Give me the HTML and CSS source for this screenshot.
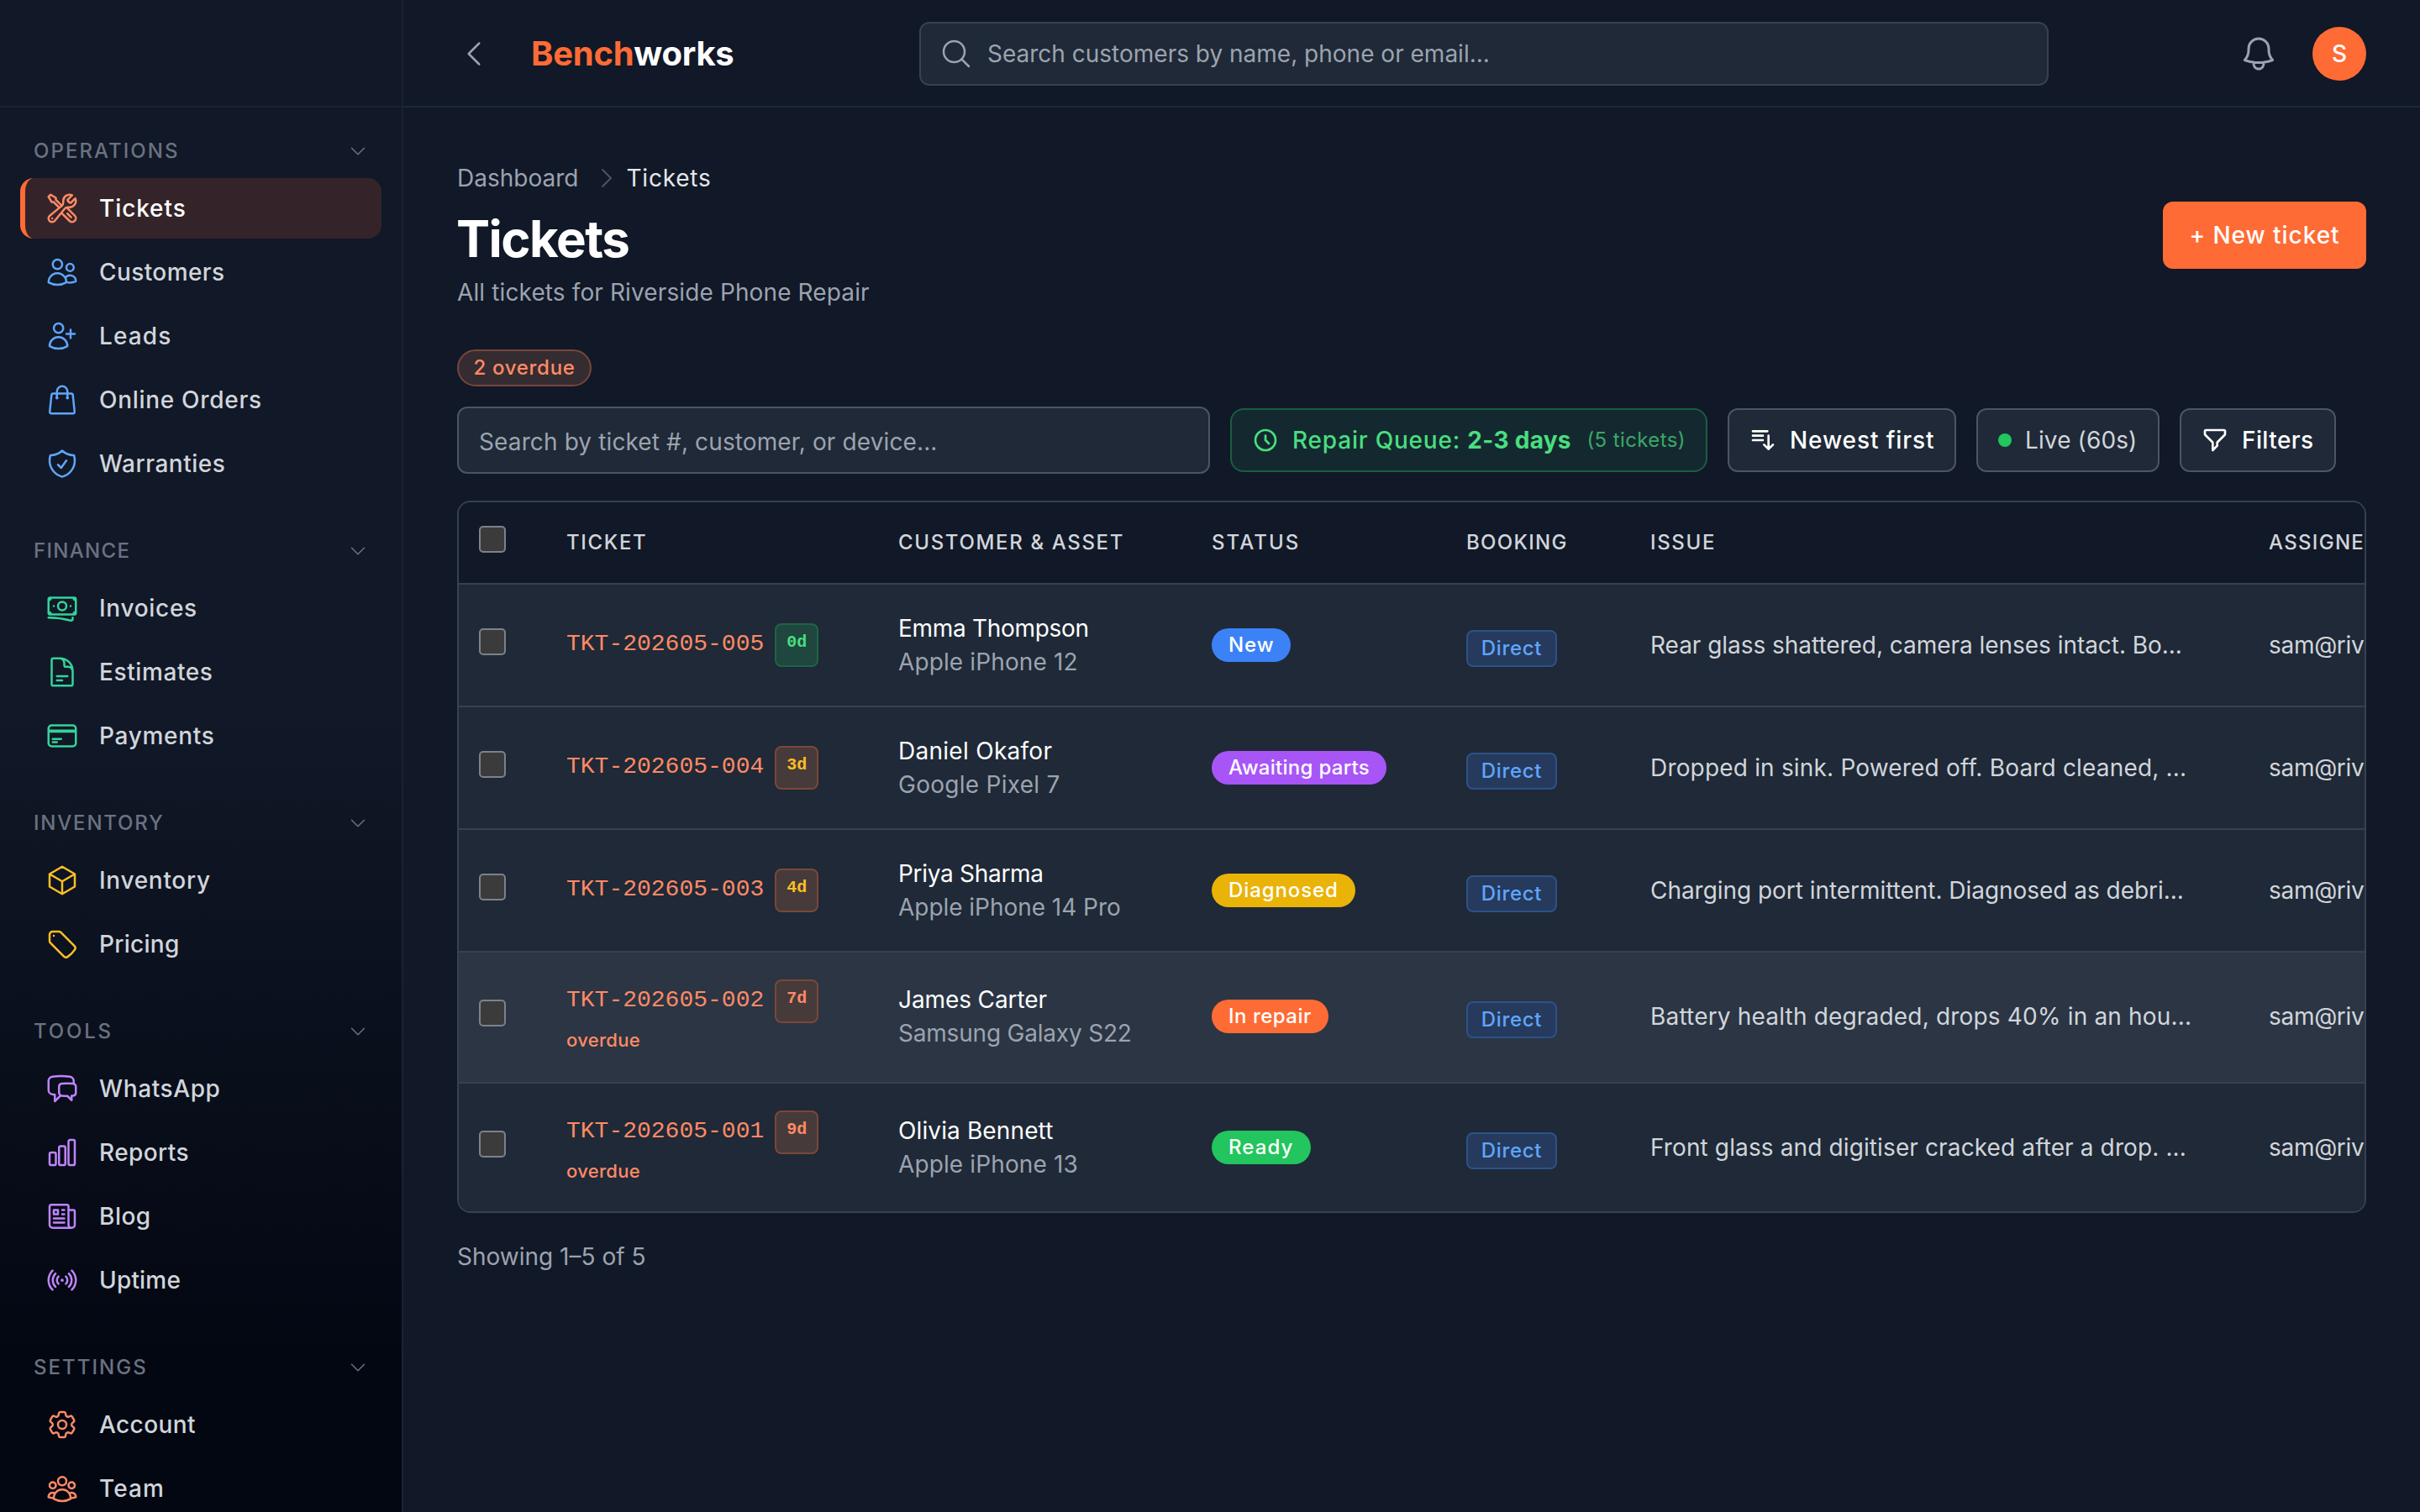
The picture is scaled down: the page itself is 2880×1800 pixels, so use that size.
FILE: index.html
```html
<!DOCTYPE html>
<html lang="en">
<head>
<meta charset="utf-8">
<title>Tickets - Benchworks</title>
<link rel="stylesheet" href="styles.css">
</head>
<body>
<div class="app">
  <aside class="sidebar">
    <div class="sidebar-top"></div>
    <nav class="nav">
      <section class="group blue">
        <h2 class="group-title ls-20">Operations<svg class="chev" viewBox="0 0 24 24"><path d="m19.5 8.25-7.5 7.5-7.5-7.5"/></svg></h2>
        <a class="item active ls-9"><svg viewBox="0 0 24 24"><path d="M11.42 15.17 17.25 21A2.652 2.652 0 0 0 21 17.25l-5.877-5.877M11.42 15.17l2.496-3.03c.317-.384.74-.626 1.208-.766M11.42 15.17l-4.655 5.653a2.548 2.548 0 1 1-3.586-3.586l6.837-5.63m5.108-.233c.55-.164 1.163-.188 1.743-.14a4.5 4.5 0 0 0 4.486-6.336l-3.276 3.277a3.004 3.004 0 0 1-2.25-2.25l3.276-3.276a4.5 4.5 0 0 0-6.336 4.486c.091 1.076-.071 2.264-.904 2.95l-.102.085m-1.745 1.437L5.909 7.5H4.5L2.25 3.75l1.5-1.5L7.5 4.5v1.409l4.26 4.26m-1.745 1.437 1.745-1.437m6.615 8.206L15.75 15.75M4.867 19.125h.008v.008h-.008v-.008Z"/></svg>Tickets</a>
        <a class="item ls-4"><svg viewBox="0 0 24 24"><path d="M15 19.128a9.38 9.38 0 0 0 2.625.372 9.337 9.337 0 0 0 4.121-.952 4.125 4.125 0 0 0-7.533-2.493M15 19.128v-.003c0-1.113-.285-2.16-.786-3.07M15 19.128v.106A12.318 12.318 0 0 1 8.624 21c-2.331 0-4.512-.645-6.374-1.766l-.001-.109a6.375 6.375 0 0 1 11.964-3.07M12 6.375a3.375 3.375 0 1 1-6.75 0 3.375 3.375 0 0 1 6.75 0Zm8.25 2.25a2.625 2.625 0 1 1-5.25 0 2.625 2.625 0 0 1 5.25 0Z"/></svg>Customers</a>
        <a class="item ls-10"><svg viewBox="0 0 24 24"><path d="M18 7.5v3m0 0v3m0-3h3m-3 0h-3m-2.25-4.125a3.375 3.375 0 1 1-6.75 0 3.375 3.375 0 0 1 6.75 0ZM3 19.235v-.11a6.375 6.375 0 0 1 12.75 0v.109A12.318 12.318 0 0 1 9.374 21c-2.331 0-4.512-.645-6.374-1.766Z"/></svg>Leads</a>
        <a class="item ls-7"><svg viewBox="0 0 24 24"><path d="M15.75 10.5V6a3.75 3.75 0 1 0-7.5 0v4.5m11.356-1.993 1.263 12c.07.665-.45 1.243-1.119 1.243H4.25a1.125 1.125 0 0 1-1.12-1.243l1.264-12A1.125 1.125 0 0 1 5.513 7.5h12.974c.576 0 1.059.435 1.119 1.007ZM8.625 10.5a.375.375 0 1 1-.75 0 .375.375 0 0 1 .75 0Zm7.5 0a.375.375 0 1 1-.75 0 .375.375 0 0 1 .75 0Z"/></svg>Online Orders</a>
        <a class="item ls-5"><svg viewBox="0 0 24 24"><path d="M9 12.75 11.25 15 15 9.75m-3-7.036A11.959 11.959 0 0 1 3.598 6 11.99 11.99 0 0 0 3 9.749c0 5.592 3.824 10.29 9 11.623 5.176-1.332 9-6.03 9-11.622 0-1.31-.21-2.571-.598-3.751h-.152c-3.196 0-6.1-1.248-8.25-3.285Z"/></svg>Warranties</a>
      </section>
      <section class="group green">
        <h2 class="group-title ls-13">Finance<svg class="chev" viewBox="0 0 24 24"><path d="m19.5 8.25-7.5 7.5-7.5-7.5"/></svg></h2>
        <a class="item ls-7"><svg viewBox="0 0 24 24"><path d="M2.25 18.75a60.07 60.07 0 0 1 15.797 2.101c.727.198 1.453-.342 1.453-1.096V18.75M3.75 4.5v.75A.75.75 0 0 1 3 6h-.75m0 0v-.375c0-.621.504-1.125 1.125-1.125H20.25M2.25 6v9m18-10.5v.75c0 .414.336.75.75.75h.75m-1.5-1.5h.375c.621 0 1.125.504 1.125 1.125v9.75c0 .621-.504 1.125-1.125 1.125h-.375m1.5-1.5H21a.75.75 0 0 0-.75.75v.75m0 0H3.75m0 0h-.375a1.125 1.125 0 0 1-1.125-1.125V15m1.5 1.5v-.75A.75.75 0 0 0 3 15h-.75M15 10.5a3 3 0 1 1-6 0 3 3 0 0 1 6 0Zm3 0h.008v.008H18V10.5Zm-12 0h.008v.008H6V10.5Z"/></svg>Invoices</a>
        <a class="item ls-6"><svg viewBox="0 0 24 24"><path d="M19.5 14.25v-2.625a3.375 3.375 0 0 0-3.375-3.375h-1.5A1.125 1.125 0 0 1 13.5 7.125v-1.5a3.375 3.375 0 0 0-3.375-3.375H8.25m0 12.75h7.5m-7.5 3H12M10.5 2.25H5.625c-.621 0-1.125.504-1.125 1.125v17.25c0 .621.504 1.125 1.125 1.125h12.75c.621 0 1.125-.504 1.125-1.125V11.25a9 9 0 0 0-9-9Z"/></svg>Estimates</a>
        <a class="item ls-7"><svg viewBox="0 0 24 24"><path d="M2.25 8.25h19.5M2.25 9h19.5m-16.5 5.25h6m-6 2.25h3m-3.75 3h15a2.25 2.25 0 0 0 2.25-2.25V6.75A2.25 2.25 0 0 0 19.5 4.5h-15a2.25 2.25 0 0 0-2.25 2.25v10.5A2.25 2.25 0 0 0 4.5 19.5Z"/></svg>Payments</a>
      </section>
      <section class="group amber">
        <h2 class="group-title ls-18">Inventory<svg class="chev" viewBox="0 0 24 24"><path d="m19.5 8.25-7.5 7.5-7.5-7.5"/></svg></h2>
        <a class="item ls-7"><svg viewBox="0 0 24 24"><path d="m21 7.5-9-5.25L3 7.5m18 0-9 5.25m9-5.25v9l-9 5.25M3 7.5l9 5.25M3 7.5v9l9 5.25m0-9v9"/></svg>Inventory</a>
        <a class="item ls-3"><svg viewBox="0 0 24 24"><path d="M9.568 3H5.25A2.25 2.25 0 0 0 3 5.25v4.318c0 .597.237 1.17.659 1.591l9.581 9.581c.699.699 1.78.872 2.607.33a18.095 18.095 0 0 0 5.223-5.223c.542-.827.369-1.908-.33-2.607L11.16 3.66A2.25 2.25 0 0 0 9.568 3Z"/><path d="M6 6h.008v.008H6V6Z"/></svg>Pricing</a>
      </section>
      <section class="group purple">
        <h2 class="group-title ls-28">Tools<svg class="chev" viewBox="0 0 24 24"><path d="m19.5 8.25-7.5 7.5-7.5-7.5"/></svg></h2>
        <a class="item ls-6"><svg viewBox="0 0 24 24"><path d="M20.25 8.511c.884.284 1.5 1.128 1.5 2.097v4.286c0 1.136-.847 2.1-1.98 2.193-.34.027-.68.052-1.02.072v3.091l-3-3c-1.354 0-2.694-.055-4.02-.163a2.115 2.115 0 0 1-.825-.242m9.345-8.334a2.126 2.126 0 0 0-.476-.095 48.64 48.64 0 0 0-8.048 0c-1.131.094-1.976 1.057-1.976 2.192v4.286c0 .837.46 1.58 1.155 1.951m9.345-8.334V6.637c0-1.621-1.152-3.026-2.76-3.235A48.455 48.455 0 0 0 11.25 3c-2.115 0-4.198.137-6.24.402-1.608.209-2.76 1.614-2.76 3.235v6.226c0 1.621 1.152 3.026 2.76 3.235.577.075 1.157.14 1.74.194V21l4.155-4.155"/></svg>WhatsApp</a>
        <a class="item ls-4"><svg viewBox="0 0 24 24"><path d="M3 13.125C3 12.504 3.504 12 4.125 12h2.25c.621 0 1.125.504 1.125 1.125v6.75C7.5 20.496 6.996 21 6.375 21h-2.25A1.125 1.125 0 0 1 3 19.875v-6.75ZM9.75 8.625c0-.621.504-1.125 1.125-1.125h2.25c.621 0 1.125.504 1.125 1.125v11.25c0 .621-.504 1.125-1.125 1.125h-2.25a1.125 1.125 0 0 1-1.125-1.125V8.625ZM16.5 4.125c0-.621.504-1.125 1.125-1.125h2.25C20.496 3 21 3.504 21 4.125v15.75c0 .621-.504 1.125-1.125 1.125h-2.25a1.125 1.125 0 0 1-1.125-1.125V4.125Z"/></svg>Reports</a>
        <a class="item ls-5"><svg viewBox="0 0 24 24"><path d="M12 7.5h1.5m-1.5 3h1.5m-7.5 3h7.5m-7.5 3h7.5m3-9h3.375c.621 0 1.125.504 1.125 1.125V18a2.25 2.25 0 0 1-2.25 2.25M16.5 7.5V18a2.25 2.25 0 0 0 2.25 2.25M16.5 7.5V4.875c0-.621-.504-1.125-1.125-1.125H4.125C3.504 3.75 3 4.254 3 4.875V18a2.25 2.25 0 0 0 2.25 2.25h13.5M6 7.5h3v3H6v-3Z"/></svg>Blog</a>
        <a class="item ls-2"><svg viewBox="0 0 24 24"><path d="M9.348 14.652a3.75 3.75 0 0 1 0-5.304m5.304 0a3.75 3.75 0 0 1 0 5.304m-7.425 2.121a6.75 6.75 0 0 1 0-9.546m9.546 0a6.75 6.75 0 0 1 0 9.546M5.106 18.894c-3.808-3.807-3.808-9.98 0-13.788m13.788 0c3.808 3.807 3.808 9.98 0 13.788M12 12h.008v.008H12V12Zm.375 0a.375.375 0 1 1-.75 0 .375.375 0 0 1 .75 0Z"/></svg>Uptime</a>
      </section>
      <section class="group coral">
        <h2 class="group-title ls-20">Settings<svg class="chev" viewBox="0 0 24 24"><path d="m19.5 8.25-7.5 7.5-7.5-7.5"/></svg></h2>
        <a class="item ls-4"><svg viewBox="0 0 24 24"><path d="M9.594 3.94c.09-.542.56-.94 1.11-.94h2.593c.55 0 1.02.398 1.11.94l.213 1.281c.063.374.313.686.645.87.074.04.147.083.22.127.325.196.72.257 1.075.124l1.217-.456a1.125 1.125 0 0 1 1.37.49l1.296 2.247a1.125 1.125 0 0 1-.26 1.431l-1.003.827c-.293.241-.438.613-.43.992a7.723 7.723 0 0 1 0 .255c-.008.378.137.75.43.991l1.004.827c.424.35.534.955.26 1.43l-1.298 2.247a1.125 1.125 0 0 1-1.369.491l-1.217-.456c-.355-.133-.75-.072-1.076.124a6.47 6.47 0 0 1-.22.128c-.331.183-.581.495-.644.869l-.213 1.281c-.09.543-.56.94-1.11.94h-2.594c-.55 0-1.019-.398-1.11-.94l-.213-1.281c-.062-.374-.312-.686-.644-.87a6.52 6.52 0 0 1-.22-.127c-.325-.196-.72-.257-1.076-.124l-1.217.456a1.125 1.125 0 0 1-1.369-.49l-1.297-2.247a1.125 1.125 0 0 1 .26-1.431l1.004-.827c.292-.24.437-.613.43-.991a6.932 6.932 0 0 1 0-.255c.007-.38-.138-.751-.43-.992l-1.004-.827a1.125 1.125 0 0 1-.26-1.43l1.297-2.247a1.125 1.125 0 0 1 1.37-.491l1.216.456c.356.133.751.072 1.076-.124.072-.044.146-.086.22-.128.332-.183.582-.495.644-.869l.214-1.28Z"/><path d="M15 12a3 3 0 1 1-6 0 3 3 0 0 1 6 0Z"/></svg>Account</a>
        <a class="item ls-10"><svg viewBox="0 0 24 24"><path d="M18 18.72a9.094 9.094 0 0 0 3.741-.479 3 3 0 0 0-4.682-2.72m.94 3.198.001.031c0 .225-.012.447-.037.666A11.944 11.944 0 0 1 12 21c-2.17 0-4.207-.576-5.963-1.584A6.062 6.062 0 0 1 6 18.719m12 0a5.971 5.971 0 0 0-.941-3.197m0 0A5.995 5.995 0 0 0 12 12.75a5.995 5.995 0 0 0-5.058 2.772m0 0a3 3 0 0 0-4.681 2.72 8.986 8.986 0 0 0 3.74.477m.94-3.197a5.971 5.971 0 0 0-.94 3.197M15 6.75a3 3 0 1 1-6 0 3 3 0 0 1 6 0Zm6 3a2.25 2.25 0 1 1-4.5 0 2.25 2.25 0 0 1 4.5 0Zm-13.5 0a2.25 2.25 0 1 1-4.5 0 2.25 2.25 0 0 1 4.5 0Z"/></svg>Team</a>
      </section>
    </nav>
  </aside>
  <div class="main">
    <header class="topbar">
      <svg class="back" viewBox="0 0 24 24"><path d="M15.75 19.5 8.25 12l7.5-7.5"/></svg>
      <div class="logo"><span class="logo-accent">Bench</span>works</div>
      <div class="global-search"><svg viewBox="0 0 24 24"><path d="m21 21-5.197-5.197m0 0A7.5 7.5 0 1 0 5.196 5.196a7.5 7.5 0 0 0 10.607 10.607Z"/></svg>Search customers by name, phone or email...</div>
      <svg class="bell" viewBox="0 0 24 24"><path d="M14.857 17.082a23.848 23.848 0 0 0 5.454-1.31A8.967 8.967 0 0 1 18 9.75V9A6 6 0 0 0 6 9v.75a8.967 8.967 0 0 1-2.312 6.022c1.733.64 3.56 1.085 5.455 1.31m5.714 0a24.255 24.255 0 0 1-5.714 0m5.714 0a3 3 0 1 1-5.714 0"/></svg>
      <div class="avatar">S</div>
    </header>
    <main class="content">
      <div class="crumbs"><span>Dashboard</span><svg viewBox="0 0 24 24"><path d="m8.25 4.5 7.5 7.5-7.5 7.5"/></svg><span class="current ls-8">Tickets</span></div>
      <div class="page-head">
        <div>
          <h1 class="title">Tickets</h1>
          <p class="subtitle ls-1">All tickets for Riverside Phone Repair</p>
        </div>
        <button class="primary">+ New ticket</button>
      </div>
      <div class="overdue-pill ls-7">2 overdue</div>
      <div class="toolbar">
        <div class="ticket-search ls-1">Search by ticket #, customer, or device...</div>
        <div class="chip queue"><svg viewBox="0 0 24 24"><path d="M12 8v4l3 3m6-3a9 9 0 1 1-18 0 9 9 0 0 1 18 0Z"/></svg><span class="ls-8">Repair Queue: <b class="ls-3">2-3 days</b></span><span class="queue-count ls-4">(5 tickets)</span></div>
        <div class="chip sort ls-9"><svg viewBox="0 0 24 24"><path d="M3 4h13M3 8h9m-9 4h9m5-4v12m0 0-4-4m4 4 4-4"/></svg>Newest first</div>
        <div class="chip live ls-1"><i class="dot"></i>Live (60s)</div>
        <div class="chip filters ls-4"><svg viewBox="0 0 24 24"><path d="M3 4a1 1 0 0 1 1-1h16a1 1 0 0 1 1 1v2.586a1 1 0 0 1-.293.707l-6.414 6.414a1 1 0 0 0-.293.707V17l-4 4v-6.586a1 1 0 0 0-.293-.707L3.293 7.293A1 1 0 0 1 3 6.586V4Z"/></svg>Filters</div>
      </div>
      <div class="table">
        <div class="row head"><div class="cell check"><i class="box"></i></div><div class="cell ls-16">Ticket</div><div class="cell ls-16">Customer &amp; Asset</div><div class="cell ls-20">Status</div><div class="cell ls-13">Booking</div><div class="cell ls-16">Issue</div><div class="cell ls-13">Assignee</div></div>
        <div class="row">
          <div class="cell check"><i class="box"></i></div>
          <div class="cell ticket"><div class="ticket-line"><span class="num">TKT-202605-005</span><span class="age fresh">0d</span></div></div>
          <div class="cell customer"><span class="ls-n3">Emma Thompson</span><span class="asset ls-1">Apple iPhone 12</span></div>
          <div class="cell"><span class="status s-new ls-9">New</span></div>
          <div class="cell"><span class="booking">Direct</span></div>
          <div class="cell issue ls-0">Rear glass shattered, camera lenses intact. Bo...</div>
          <div class="cell issue ls-n3">sam@riverside.test</div>
        </div>
        <div class="row">
          <div class="cell check"><i class="box"></i></div>
          <div class="cell ticket"><div class="ticket-line"><span class="num">TKT-202605-004</span><span class="age warm">3d</span></div></div>
          <div class="cell customer"><span class="ls-3">Daniel Okafor</span><span class="asset ls-3">Google Pixel 7</span></div>
          <div class="cell"><span class="status s-wait ls-3">Awaiting parts</span></div>
          <div class="cell"><span class="booking">Direct</span></div>
          <div class="cell issue ls-2">Dropped in sink. Powered off. Board cleaned, ...</div>
          <div class="cell issue ls-n3">sam@riverside.test</div>
        </div>
        <div class="row">
          <div class="cell check"><i class="box"></i></div>
          <div class="cell ticket"><div class="ticket-line"><span class="num">TKT-202605-003</span><span class="age warm">4d</span></div></div>
          <div class="cell customer"><span class="ls-n3">Priya Sharma</span><span class="asset ls-0">Apple iPhone 14 Pro</span></div>
          <div class="cell"><span class="status s-diag ls-9">Diagnosed</span></div>
          <div class="cell"><span class="booking">Direct</span></div>
          <div class="cell issue ls-0">Charging port intermittent. Diagnosed as debri...</div>
          <div class="cell issue ls-n3">sam@riverside.test</div>
        </div>
        <div class="row late hover">
          <div class="cell check"><i class="box"></i></div>
          <div class="cell ticket"><div class="ticket-line"><span class="num">TKT-202605-002</span><span class="age hot">7d</span></div><span class="late-note">overdue</span></div>
          <div class="cell customer"><span class="ls-n1">James Carter</span><span class="asset ls-n2">Samsung Galaxy S22</span></div>
          <div class="cell"><span class="status s-repair ls-5">In repair</span></div>
          <div class="cell"><span class="booking">Direct</span></div>
          <div class="cell issue ls-2">Battery health degraded, drops 40% in an hou...</div>
          <div class="cell issue ls-n3">sam@riverside.test</div>
        </div>
        <div class="row late last">
          <div class="cell check"><i class="box"></i></div>
          <div class="cell ticket"><div class="ticket-line"><span class="num">TKT-202605-001</span><span class="age hot">9d</span></div><span class="late-note">overdue</span></div>
          <div class="cell customer"><span class="ls-1">Olivia Bennett</span><span class="asset ls-1">Apple iPhone 13</span></div>
          <div class="cell"><span class="status s-ready ls-10">Ready</span></div>
          <div class="cell"><span class="booking">Direct</span></div>
          <div class="cell issue ls-1">Front glass and digitiser cracked after a drop. ...</div>
          <div class="cell issue ls-n3">sam@riverside.test</div>
        </div>
      </div>
      <p class="showing">Showing 1–5 of 5</p>
    </main>
  </div>
</div>
</body>
</html>
```
FILE: styles.css
```css
* { box-sizing: border-box; margin: 0; padding: 0; }
body {
  font-family: Inter, "Liberation Sans", sans-serif;
  font-size: 28px;
  line-height: 40px;
  color: #fff;
  background: #111827;
  overflow: hidden;
}
svg { flex: none; fill: none; stroke: currentColor; stroke-width: 1.5; stroke-linecap: round; stroke-linejoin: round; }
.app { display: flex; width: 2880px; height: 1800px; overflow: hidden; }

/* Sidebar */
.sidebar { flex: none; width: 480px; border-right: 2px solid #1a2231; background: linear-gradient(#111827 0%, #111827 47%, #030712 90%); overflow: hidden; }
.sidebar-top { height: 128px; border-bottom: 2px solid #1a2231; }
.nav { display: flex; flex-direction: column; gap: 44px; padding: 28px 24px; }
.group { display: flex; flex-direction: column; gap: 4px; }
.group-title { display: flex; align-items: center; justify-content: space-between; height: 48px; margin-bottom: 4px; padding: 0 16px; font-size: 24px; font-weight: 500; text-transform: uppercase; color: #6b7280; }
.chev { width: 24px; height: 24px; }
.item { display: flex; align-items: center; gap: 24px; height: 72px; padding-left: 24px; border-left: 6px solid transparent; border-radius: 16px; font-weight: 500; color: #d1d5db; }
.item svg { width: 40px; height: 40px; }
.blue svg { color: #60a5fa; }
.green svg { color: #34d399; }
.amber svg { color: #fbbf24; }
.purple svg { color: #c084fc; }
.coral svg { color: #ff8a65; }
.group .chev { color: #6b7280; }
.item.active { border-left-color: #ff6b35; background: rgba(255, 107, 53, 0.15); color: #fff; }
.item.active svg { color: #ff8a65; }

/* Top bar */
.main { flex: none; width: 2400px; }
.topbar { display: flex; align-items: center; height: 128px; padding: 2px 64px 0; border-bottom: 2px solid #1f2937; }
.back { width: 40px; height: 40px; color: #9ca3af; }
.logo { width: 510px; padding-left: 48px; font-size: 40px; font-weight: 700; letter-spacing: -0.27px; }
.logo-accent { color: #ff6b35; }
.global-search { display: flex; align-items: center; gap: 17px; width: 1344px; height: 76px; padding-left: 22px; border: 2px solid #374151; border-radius: 12px; background: #1f2937; color: #9ca3af; }
.global-search svg { width: 40px; height: 40px; }
.bell { width: 48px; height: 48px; margin-left: auto; color: #9ca3af; }
.avatar { width: 64px; height: 64px; margin-left: 40px; border-radius: 50%; background: #ff6b35; font-weight: 500; line-height: 64px; text-align: center; }

/* Page heading */
.content { padding: 64px; }
.crumbs { display: flex; align-items: center; height: 40px; color: #9ca3af; }
.crumbs svg { width: 32px; height: 32px; margin: 0 7px 0 18px; color: #4b5563; }
.crumbs .current { color: #e5e7eb; }
.page-head { display: flex; justify-content: space-between; align-items: flex-start; }
.title { margin: 16px 0 0 -1px; font-size: 60px; line-height: 72px; font-weight: 700; letter-spacing: -1.5px; }
.subtitle { margin-top: 8px; color: #9ca3af; }
.primary { width: 242px; height: 80px; margin-top: 8px; border: 0; border-radius: 12px; background: #ff6b35; color: #fff; font: inherit; font-weight: 500; letter-spacing: 0.95px; }
.overdue-pill { width: 160px; height: 44px; margin-top: 48px; border: 2px solid #76473a; border-radius: 22px; background: #352c31; color: #ff8a65; font-size: 24px; line-height: 40px; font-weight: 500; text-align: center; }

/* Toolbar */
.toolbar { display: flex; align-items: center; gap: 24px; margin-top: 24px; }
.ticket-search { width: 896px; height: 80px; padding: 0 24px; border: 2px solid #4b5563; border-radius: 12px; background: #1f2937; color: #9ca3af; line-height: 80px; }
.chip { display: flex; align-items: center; gap: 16px; height: 76px; padding: 0 24px; border: 2px solid #4b5563; border-radius: 12px; background: #1f2937; font-weight: 500; white-space: nowrap; }
.chip svg { width: 32px; height: 32px; stroke-width: 2; }
.queue { width: 568px; border-color: #1a5d40; border-radius: 16px; background: #14292f; color: #4ade80; }
.queue b { font-weight: 700; }
.queue-count { margin-left: auto; font-size: 24px; font-weight: 400; opacity: 0.7; }
.sort { width: 272px; }
.live { width: 218px; color: #d1d5db; font-weight: 400; }
.filters { width: 186px; }
.dot { width: 16px; height: 16px; border-radius: 50%; background: #22c55e; }

/* Ticket table */
.table { height: 848px; margin-top: 32px; border: 2px solid #374151; border-radius: 16px; overflow: hidden; }
.row { display: grid; grid-template-columns: 128px 395px 373px 303px 219px 736px 400px; height: 146px; border-bottom: 2px solid #374151; background: #1f2937; }
.cell { display: flex; align-items: center; }
.head { height: 98px; background: #111827; color: #d1d5db; font-size: 24px; font-weight: 500; text-transform: uppercase; }
.check { padding: 0 0 8px 24px; }
.box { width: 32px; height: 32px; border: 2px solid #7c828b; border-radius: 5px; background: #3b3b3b; }
.late { height: 156px; padding-bottom: 2px; }
.hover { background: #2b3544; }
.last { height: 152px; padding-bottom: 0; border-bottom: 0; }
.ticket { flex-direction: column; align-items: flex-start; justify-content: center; }
.ticket-line { display: flex; align-items: center; gap: 13px; }
.num, .age { font-family: "Liberation Mono", monospace; }
.num { padding-bottom: 2px; color: #ff8a65; }
.age { width: 52px; height: 52px; border: 2px solid; border-radius: 8px; font-size: 20px; font-weight: 700; line-height: 42px; text-align: center; }
.fresh { border-color: #1d6544; background: #1f463f; color: #4ade80; }
.warm { border-color: #7a4838; background: #463a3a; color: #fbbf24; }
.hot { border-color: #7a4838; background: #463a3a; color: #ff8a65; }
.late-note { margin-top: 4px; font-size: 22px; line-height: 32px; font-weight: 500; letter-spacing: 0.3px; color: #ff8a65; }
.customer { flex-direction: column; align-items: flex-start; justify-content: center; }
.asset { color: #9ca3af; }
.status { height: 40px; padding: 0 20px; border-radius: 20px; font-size: 24px; font-weight: 500; line-height: 40px; }
.s-new { background: #3b82f6; }
.s-wait { background: #a855f7; }
.s-diag { background: #eab308; }
.s-repair { background: #ff6b35; }
.s-ready { background: #22c55e; }
.booking { width: 108px; height: 44px; margin-top: 8px; border: 2px solid #2c5288; border-radius: 8px; background: #253a5d; color: #60a5fa; font-size: 24px; line-height: 40px; text-align: center; font-weight: 500; letter-spacing: 0.7px; }
.issue { color: #d1d5db; white-space: nowrap; }
.showing { margin-top: 32px; color: #9ca3af; }

.ls-n3 { letter-spacing: -0.3px; }
.ls-n2 { letter-spacing: -0.2px; }
.ls-n1 { letter-spacing: -0.1px; }
.ls-0 { letter-spacing: -0.04px; }
.ls-1 { letter-spacing: 0.12px; }
.ls-2 { letter-spacing: 0.18px; }
.ls-3 { letter-spacing: 0.28px; }
.ls-4 { letter-spacing: 0.4px; }
.ls-5 { letter-spacing: 0.5px; }
.ls-6 { letter-spacing: 0.6px; }
.ls-7 { letter-spacing: 0.7px; }
.ls-8 { letter-spacing: 0.8px; }
.ls-9 { letter-spacing: 0.9px; }
.ls-10 { letter-spacing: 1.1px; }
.ls-13 { letter-spacing: 1.3px; }
.ls-16 { letter-spacing: 1.65px; }
.ls-18 { letter-spacing: 1.8px; }
.ls-20 { letter-spacing: 2.05px; }
.ls-28 { letter-spacing: 2.8px; }
```
